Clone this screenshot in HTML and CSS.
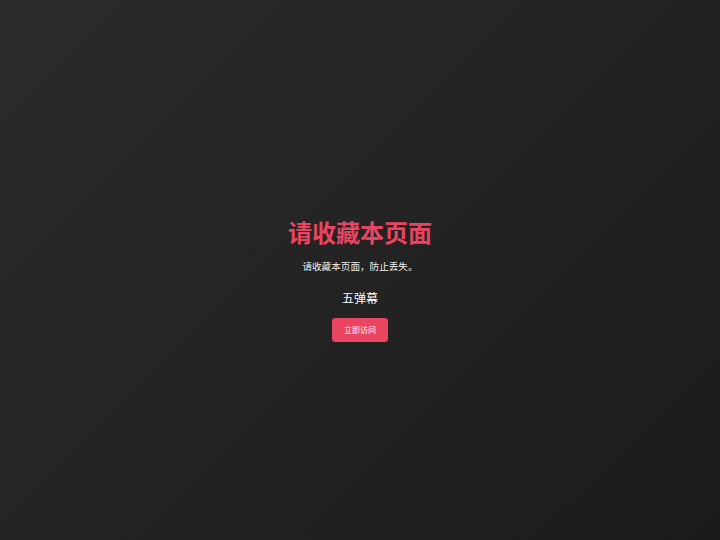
FILE: index.html
```html
<!DOCTYPE html>
<html lang="zh">
<head>
<meta charset="utf-8">
<link rel="stylesheet" href="styles.css">
</head>
<body>
<main class="page">
  <div class="box">
    <h1 class="title">请收藏本页面</h1>
    <p class="desc">请收藏本页面，防止丢失。</p>
    <p class="name">五弹幕</p>
    <a class="btn" href="#">立即访问</a>
  </div>
</main>
</body>
</html>
```
FILE: styles.css
```css
html, body {
  margin: 0;
  padding: 0;
  height: 100%;
}
body {
  background: linear-gradient(135deg, #2b2b2b 0%, #1b1b1b 100%);
  font-family: "Noto Sans CJK SC", "Noto Sans", sans-serif;
  color: #fff;
}
.page {
  height: 100%;
  display: flex;
  align-items: center;
  justify-content: center;
}
.box {
  display: flex;
  flex-direction: column;
  align-items: center;
  margin-top: 18px;
}
.title {
  margin: 0;
  font-size: 24px;
  line-height: 32px;
  font-weight: 700;
  color: #e94560;
}
.desc {
  margin: 10px 0 0;
  font-size: 9.6px;
  line-height: 16px;
  color: #f0f0f0;
}
.name {
  margin: 14px 0 0;
  font-size: 12px;
  line-height: 20px;
  color: #fff;
}
.btn {
  margin-top: 10px;
  display: block;
  width: 56px;
  height: 24px;
  line-height: 24px;
  text-align: center;
  background: #e94560;
  color: #fff;
  font-size: 8px;
  border-radius: 3px;
  text-decoration: none;
}
```
